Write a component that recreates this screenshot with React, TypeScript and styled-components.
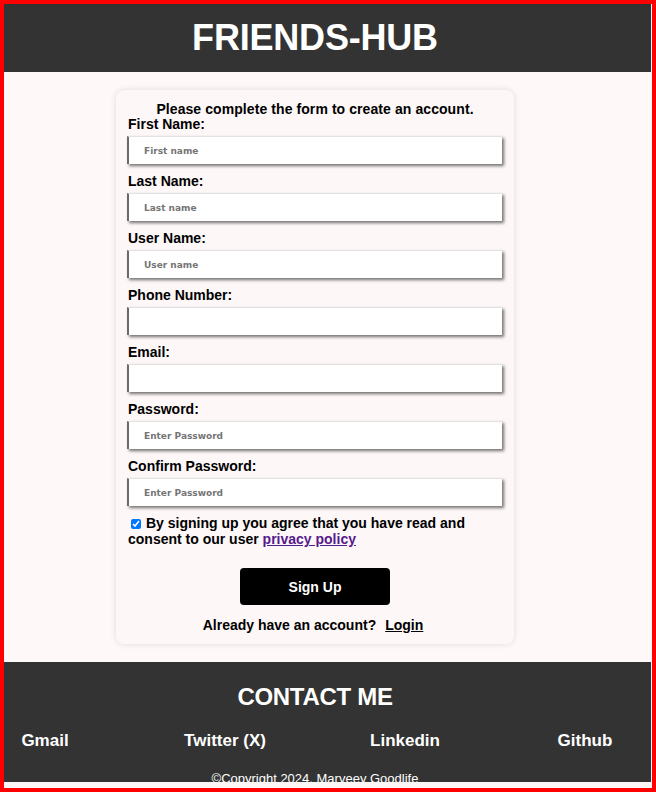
import React from "react";
import styled, { createGlobalStyle } from "styled-components";

const Global = createGlobalStyle`
  html, body { margin: 0; padding: 0; }
  body { font-family: "Liberation Sans", Arial, sans-serif; background: #fff; }
  * { box-sizing: border-box; }
`;

const Frame = styled.div`
  width: 656px;
  height: 792px;
  border: 4px solid #ff0000;
  background: #fdf6f6;
  overflow: hidden;
  padding: 0 1px 6px 0;
`;

const Viewport = styled.div`
  height: 100%;
  overflow: hidden;
  background: #fff8f8;
`;

const Header = styled.header`
  background: #333333;
  height: 68px;
  display: flex;
  align-items: center;
  justify-content: center;
  padding-right: 25px;
`;

const Title = styled.h1`
  margin: 0;
  color: #ffffff;
  font-size: 36px;
  font-weight: 700;
  letter-spacing: -0.2px;
`;

const Main = styled.main`
  padding: 18px 25px 18px 0;
  display: flex;
  justify-content: center;
`;

const Card = styled.form`
  width: 398px;
  background: #fdf7f7;
  border-radius: 8px;
  box-shadow: 0 0 6px rgba(0, 0, 0, 0.12);
  padding: 11px 12px 11px 12px;
  display: flex;
  flex-direction: column;
`;

const Intro = styled.p`
  margin: 0 0 -1px 0;
  text-align: center;
  font-size: 14px;
  font-weight: 700;
  line-height: 16px;
  color: #000;
  letter-spacing: 0.08px;
`;

const Field = styled.div`
  display: flex;
  flex-direction: column;
  margin-bottom: 9px;
`;

const Label = styled.label`
  font-size: 14px;
  font-weight: 700;
  line-height: 16px;
  color: #000;
  margin-bottom: 4px;
`;

const Input = styled.input`
  width: 375px;
  height: 28px;
  margin-left: -1px;
  border: none;
  border-left: 2px solid #6a6a6a;
  border-top: 1px solid #e2e2e2;
  background: #fff;
  box-shadow: 2px 2px 3px rgba(0, 0, 0, 0.55);
  padding: 0 0 0 15px;
  font-family: "DejaVu Sans", Verdana, sans-serif;
  font-size: 9px;
  font-weight: 700;
  outline: none;
  &::placeholder {
    color: #757575;
  }
`;

const Agree = styled.p`
  margin: 0;
  font-size: 14px;
  font-weight: 700;
  line-height: 16px;
  color: #000;
`;

const Check = styled.input`
  width: 10px;
  height: 10px;
  margin: 0 5px 0 3px;
  vertical-align: -1px;
  accent-color: #0075ff;
`;

const PolicyLink = styled.a`
  color: #551a8b;
  text-decoration: underline;
`;

const SubmitButton = styled.button`
  align-self: center;
  margin: 21px 0 12px 0;
  width: 150px;
  height: 37px;
  border: none;
  border-radius: 4px;
  background: #000;
  color: #fff;
  font-family: "Liberation Sans", Arial, sans-serif;
  font-size: 14px;
  font-weight: 700;
`;

const LoginLine = styled.p`
  margin: 0 0 0 -4px;
  text-align: center;
  font-size: 14px;
  font-weight: 700;
  line-height: 16px;
  color: #000;
`;

const LoginLink = styled.a`
  color: #000;
  text-decoration: underline;
  margin-left: 9px;
`;

const Footer = styled.footer`
  background: #333333;
  color: #fff;
  padding-top: 21px;
  display: flex;
  flex-direction: column;
`;

const FooterTitle = styled.h2`
  margin: 0 25px 0 0;
  text-align: center;
  font-size: 24px;
  line-height: 28px;
  font-weight: 700;
  letter-spacing: -0.3px;
`;

const LinkRow = styled.nav`
  display: flex;
  gap: 98px;
  margin-top: 20px;
`;

const SocialLink = styled.a`
  width: 82px;
  text-align: center;
  color: #fff;
  text-decoration: none;
  font-size: 17px;
  line-height: 20px;
  font-weight: 700;
  white-space: nowrap;
`;

const Copy = styled.p`
  margin: 20px 25px 0 0;
  text-align: center;
  font-size: 13px;
  line-height: 16px;
  padding-bottom: 20px;
`;

const fields = [
  { label: "First Name:", placeholder: "First name", type: "text" },
  { label: "Last Name:", placeholder: "Last name", type: "text" },
  { label: "User Name:", placeholder: "User name", type: "text" },
  { label: "Phone Number:", placeholder: "", type: "tel" },
  { label: "Email:", placeholder: "", type: "email" },
  { label: "Password:", placeholder: "Enter Password", type: "password" },
  { label: "Confirm Password:", placeholder: "Enter Password", type: "password" },
];

export default function App() {
  return (
    <>
      <Global />
      <Frame>
        <Viewport>
          <Header>
            <Title>FRIENDS-HUB</Title>
          </Header>
          <Main>
            <Card onSubmit={(e) => e.preventDefault()}>
              <Intro>Please complete the form to create an account.</Intro>
              {fields.map((f) => (
                <Field key={f.label}>
                  <Label>{f.label}</Label>
                  <Input type={f.type} placeholder={f.placeholder} />
                </Field>
              ))}
              <Agree>
                <Check type="checkbox" defaultChecked />
                By signing up you agree that you have read and consent to our user{" "}
                <PolicyLink href="#">privacy policy</PolicyLink>
              </Agree>
              <SubmitButton type="submit">Sign Up</SubmitButton>
              <LoginLine>
                Already have an account?<LoginLink href="#">Login</LoginLink>
              </LoginLine>
            </Card>
          </Main>
          <Footer>
            <FooterTitle>CONTACT ME</FooterTitle>
            <LinkRow>
              <SocialLink href="#">Gmail</SocialLink>
              <SocialLink href="#">Twitter (X)</SocialLink>
              <SocialLink href="#">Linkedin</SocialLink>
              <SocialLink href="#">Github</SocialLink>
            </LinkRow>
            <Copy>©Copyright 2024. Marveey Goodlife</Copy>
          </Footer>
        </Viewport>
      </Frame>
    </>
  );
}
